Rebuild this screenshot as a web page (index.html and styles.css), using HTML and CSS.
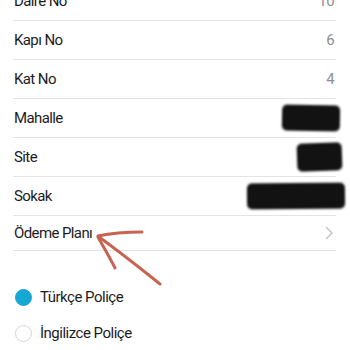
FILE: index.html
```html
<!DOCTYPE html>
<html lang="tr">
<head>
<meta charset="utf-8">
<link rel="stylesheet" href="styles.css">
</head>
<body>
<div class="page">
  <div class="list">
    <div class="row"><span class="label">Daire No</span><span class="value">10</span></div>
    <div class="row"><span class="label">Kapı No</span><span class="value">6</span></div>
    <div class="row"><span class="label">Kat No</span><span class="value">4</span></div>
    <div class="row"><span class="label">Mahalle</span><span class="redact redact-1"></span></div>
    <div class="row"><span class="label">Site</span><span class="redact redact-2"></span></div>
    <div class="row"><span class="label">Sokak</span><span class="redact redact-3"></span></div>
    <div class="row row-link"><span class="label">Ödeme Planı</span>
      <svg class="chevron" width="9" height="14" viewBox="0 0 9 14"><path d="M1.5 1.5 L7 7 L1.5 12.5" fill="none" stroke="#c7c7cc" stroke-width="1.6" stroke-linecap="round" stroke-linejoin="round"/></svg>
    </div>
  </div>
  <div class="radios">
    <div class="radio-item"><span class="radio radio-on"></span><span class="radio-label">Türkçe Poliçe</span></div>
    <div class="radio-item"><span class="radio"></span><span class="radio-label">İngilizce Poliçe</span></div>
  </div>
  <svg class="arrow" width="350" height="350" viewBox="0 0 350 350">
    <g fill="none" stroke="#c0533f" stroke-width="3" stroke-linecap="round" stroke-linejoin="round" opacity="0.9">
      <path d="M98 236 C 112 233, 126 232, 142 232"/>
      <path d="M98 237 C 104 248, 110 258, 115 268"/>
      <path d="M99 237 C 120 252, 140 268, 160 284"/>
    </g>
  </svg>
</div>
</body>
</html>
```

FILE: styles.css
```css
* { box-sizing: border-box; }
html, body { margin: 0; padding: 0; background: #ffffff; }
body {
  font-family: "Roboto", "Liberation Sans", sans-serif;
  color: #1c1c1e;
  width: 350px;
  height: 350px;
  overflow: hidden;
}
.page { position: relative; display: flow-root; width: 350px; height: 350px; }
.list { margin-top: -18px; width: 336px; padding-left: 13px; }
.row {
  display: flex;
  align-items: center;
  justify-content: space-between;
  height: 39px;
  padding: 0 2px 0 1px;
  border-bottom: 1px solid #e4e4e7;
  font-size: 15px;
  letter-spacing: -0.6px;
}
.row-link { height: 35px; }
.value { color: #8e8e93; }
.redact {
  display: block;
  background: #121212;
  border-radius: 5px;
  filter: blur(1.2px);
  height: 26px;
}
.redact-1 { width: 58px; margin-right: -6px; transform: rotate(1deg); }
.redact-2 { width: 45px; height: 28px; margin-right: -8px; transform: rotate(-2deg); }
.redact-3 { width: 98px; margin-right: -11px; transform: rotate(-0.5deg); }
.radios { padding: 28px 0 0 15px; }
.radio-item {
  display: flex;
  align-items: center;
  height: 36px;
  gap: 8px;
  font-size: 15px;
  letter-spacing: -0.5px;
}
.radio {
  width: 17px;
  height: 17px;
  border-radius: 50%;
  border: 1px solid #d6d6da;
  background: #fff;
}
.radio-on { background: #16a8d3; border-color: #16a8d3; }
.arrow { position: absolute; left: 0; top: 0; pointer-events: none; }
```
